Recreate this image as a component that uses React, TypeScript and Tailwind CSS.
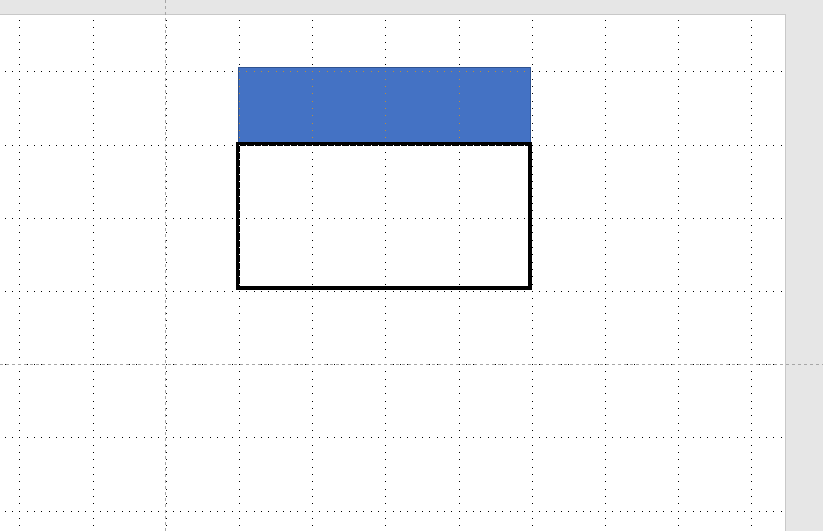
import React from 'react'

const STEP = 73.2
const DOT = 7.32
const PAGE_TOP = 15
const PAGE_RIGHT = 785

function gridDots() {
  const dots: { x: number; y: number }[] = []
  // vertical dotted lines
  for (let i = 0; i < 11; i++) {
    const x = Math.round(19.3 + STEP * i)
    for (let m = -10; m < 80; m++) {
      const y = Math.round(71.3 + DOT * m)
      if (y > PAGE_TOP && y < 531) dots.push({ x, y })
    }
  }
  // horizontal dotted lines
  for (let r = 0; r < 7; r++) {
    const y = Math.round(71.3 + STEP * r)
    for (let m = -5; m < 110; m++) {
      const x = Math.round(19.3 + DOT * m)
      if (x >= 0 && x < PAGE_RIGHT) dots.push({ x, y })
    }
  }
  return dots
}

export default function App() {
  const dots = gridDots()

  return (
    <div className="relative isolate h-[531px] w-[823px] overflow-hidden bg-[#e6e6e6] pt-[14px]">
      <div className="h-[517px] w-[786px] border-t border-r border-[#c8c8c8] bg-white" />

      {/* shapes on the slide */}
      <div className="absolute left-[238px] top-[67px] h-[76px] w-[293px] border border-[#2f528f] bg-[#4472c4]" />
      <div className="absolute left-[236px] top-[142px] h-[148px] w-[296px] border-4 border-black" />

      {/* dotted grid, drawn inverted like the editor does */}
      <svg className="pointer-events-none absolute inset-0 mix-blend-difference" width={823} height={531}>
        {dots.map((d, i) => (
          <rect key={i} x={d.x} y={d.y} width={1} height={1} fill="#ffffff" />
        ))}
      </svg>

      {/* guides */}
      <svg className="pointer-events-none absolute inset-0" width={823} height={531}>
        <line x1={165.5} y1={0} x2={165.5} y2={531} stroke="#a6a6a6" strokeDasharray="3 3" />
        <line x1={0} y1={364.5} x2={823} y2={364.5} stroke="#a6a6a6" strokeDasharray="3 3" />
      </svg>
    </div>
  )
}
